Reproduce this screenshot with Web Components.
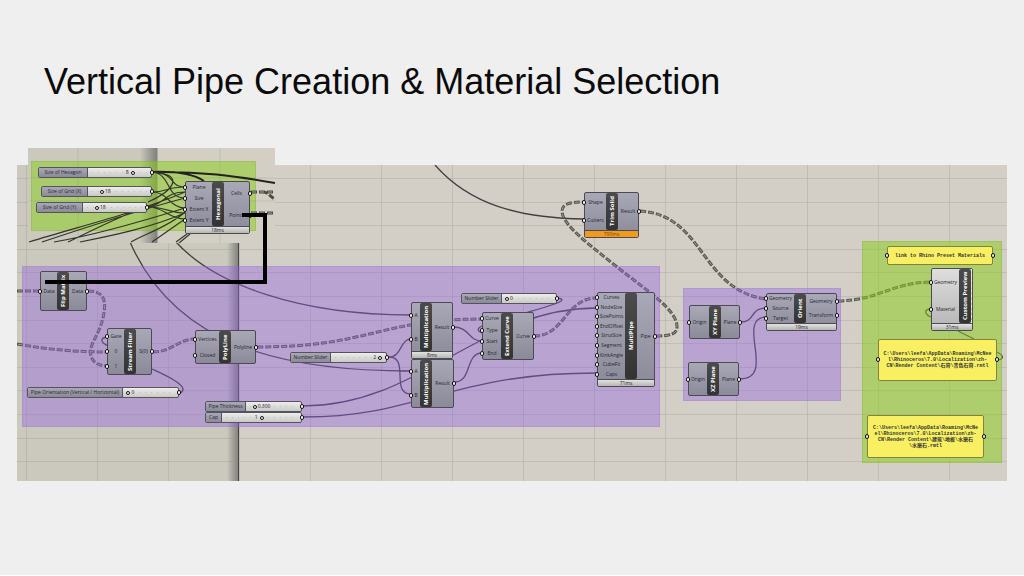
<!DOCTYPE html>
<html lang="en">
<head>
<meta charset="utf-8">
<title>Vertical Pipe Creation &amp; Material Selection</title>
<style>
  body { margin: 0; background: #efefef; font-family: "Liberation Sans", Arial, sans-serif; }
</style>
</head>
<body>
<deck-slide>
  <span slot="title">Vertical Pipe Creation &amp; Material Selection</span>
  <gh-canvas>
    <gh-wires></gh-wires>
    <gh-group x="5" y="101" w="638" h="161"></gh-group>
    <gh-group x="666" y="123" w="158" h="113"></gh-group>
    <gh-group x="845" y="76" w="140" h="222" tone="green"></gh-group>

    <gh-node x="23" y="106" w="47" h="40" core="17" name="Flip Matrix" inputs="Data" outputs="Data"></gh-node>
    <gh-node x="90" y="163" w="45" h="47" core="17" name="Stream Filter" inputs="Gate,0,1" outputs="S(0)"></gh-node>
    <gh-node x="178" y="165" w="61" h="34" core="24" name="PolyLine" inputs="Vertices,Closed" outputs="Polyline"></gh-node>
    <gh-node x="394" y="194" w="43" h="49" core="9" name="Multiplication" inputs="A,B" outputs="Result"></gh-node>
    <gh-node x="394" y="137" w="42" h="57" core="9" name="Multiplication" inputs="A,B" outputs="Result" time="8ms"></gh-node>
    <gh-node x="465" y="147" w="52" h="48" core="19" name="Extend Curve" inputs="Curve,Type,Start,End" outputs="Curve"></gh-node>
    <gh-node x="580" y="127" w="58" h="95" core="28" name="MultiPipe" inputs="Curves,NodeSize,SizePoints,EndOffset,StrutSize,Segment,KinkAngle,CubeFit,Caps" outputs="Pipe" time="71ms"></gh-node>
    <gh-node x="567" y="27" w="55" h="46" core="22" name="Trim Solid" inputs="Shape,Cutters" outputs="Result" time="790ms" state="slow"></gh-node>
    <gh-node x="672" y="140" w="51" h="34" core="20" name="XY Plane" inputs="Origin" outputs="Plane"></gh-node>
    <gh-node x="671" y="197" w="51" h="34" core="19" name="XZ Plane" inputs="Origin" outputs="Plane"></gh-node>
    <gh-node x="749" y="128" w="71" h="38" core="28" name="Orient" inputs="Geometry,Source,Target" outputs="Geometry,Transform" time="19ms"></gh-node>
    <gh-node x="914" y="103" w="42" h="63" core="28" name="Custom Preview" inputs="Geometry,Material" time="31ms" state="preview"></gh-node>

    <gh-slider x="10" y="222" w="152" label-width="95" label="Pipe Orientation (Vertical / Horizontal)" value="0" at="3"></gh-slider>
    <gh-slider x="188" y="236" w="97" label-width="40" label="Pipe Thickness" value="0.300" at="10"></gh-slider>
    <gh-slider x="188" y="247" w="97" label-width="16" label="Cap" value="1" at="50" side="left"></gh-slider>
    <gh-slider x="273" y="187" w="97" label-width="40" label="Number Slider" value="2" at="96" side="left"></gh-slider>
    <gh-slider x="444" y="128" w="96" label-width="40" label="Number Slider" value="0" at="2"></gh-slider>

    <gh-panel x="870" y="81" w="106" h="19">link to Rhino Preset Materials</gh-panel>
    <gh-panel x="861" y="174" w="119" h="42">C:\Users\leefa\AppData\Roaming\McNee<br>l\Rhinoceros\7.0\Localization\zh-<br>CN\Render Content\石膏\青色石膏.rmtl</gh-panel>
    <gh-panel x="850" y="250" w="117" h="43">C:\Users\leefa\AppData\Roaming\McNe<br>el\Rhinoceros\7.0\Localization\zh-<br>CN\Render Content\建筑\地板\水磨石<br>\水磨石.rmtl</gh-panel>

    <gh-inset>
      <gh-group x="3" y="13" w="225" h="70" tone="green"></gh-group>
      <gh-inset-wires></gh-inset-wires>
      <gh-slider x="10" y="19" w="114" label-width="49" label="Size of Hexagon" value="8" at="74" side="left"></gh-slider>
      <gh-slider x="13" y="38" w="111" label-width="46" label="Size of Grid (X)" value="18" at="18"></gh-slider>
      <gh-slider x="8" y="54" w="111" label-width="46" label="Size of Grid (Y)" value="18" at="18"></gh-slider>
      <gh-node x="157" y="33" w="65" h="53" core="27" name="Hexagonal" inputs="Plane,Size,Extent X,Extent Y" outputs="Cells,Points" time="18ms"></gh-node>
    </gh-inset>
    <gh-link></gh-link>
  </gh-canvas>
</deck-slide>

<script>
  /* Places an item on the free canvas from its x, y, w and h attributes. */
  const place = el => {
    for (const [attr, prop] of [['x', 'left'], ['y', 'top'], ['w', 'width'], ['h', 'height']]) {
      if (el.hasAttribute(attr)) el.style[prop] = el.getAttribute(attr) + 'px';
    }
  };
  const list = (el, attr) => (el.getAttribute(attr) || '').split(',').filter(Boolean);

  class Base extends HTMLElement {
    connectedCallback() {
      if (this.shadowRoot) return;
      place(this);
      this.attachShadow({ mode: 'open' }).innerHTML = this.view();
    }
  }

  customElements.define('deck-slide', class extends Base {
    view() {
      return `<style>
        :host { display: block; box-sizing: border-box; min-height: 100vh; padding: 60px 17px 40px; border-bottom: 1px solid #fff; }
        h1 { margin: 0 0 61px; padding-left: 27px; font-size: 36px; line-height: 44px; font-weight: 400; color: #0a0a0a; }
      </style><h1><slot name="title"></slot></h1><slot></slot>`;
    }
  });

  customElements.define('gh-canvas', class extends Base {
    view() {
      let grid = '';
      for (let i = 0; i < 14; i++) grid += `M${9.5 + i * 71} 0V316`;
      for (let i = 0; i < 13; i++) grid += `M0 ${Math.round(13 + i * 23.6) + 0.5}H990`;
      return `<style>
        :host { display: block; position: relative; height: 316px; background: #d3cfc7;
                font-family: "Open Sans", "Noto Sans", sans-serif; }
        .left { position: absolute; inset: 0 auto 0 0; width: 222px; border-right: 1px solid #444;
                box-sizing: border-box;
                background: linear-gradient(90deg, #cbc8be 210px, #8e8f87 219px, #85867e); }
        svg { position: absolute; inset: 0; width: 100%; height: 100%; }
      </style>
      <div class="left"></div>
      <svg aria-hidden="true"><path d="${grid}" fill="none" stroke="#8a8f7e" stroke-opacity=".26"/></svg>
      <slot></slot>`;
    }
  });

  customElements.define('gh-group', class extends Base {
    view() {
      return `<style>
        :host { display: block; position: absolute; box-sizing: border-box;
                background: rgba(146, 98, 226, .4); border: 1px solid rgba(140, 110, 200, .2); }
        :host([tone=green]) { background: rgba(137, 206, 21, .5); border-color: rgba(110, 150, 50, .2); }
      </style>`;
    }
  });

  customElements.define('gh-wires', class extends Base {
    view() {
      const tree = [
        'M17 291H40', 'M88 291C104 291 107 300 103 318C98 338 88 345 91 356C93 363 99 366 107 366',
        'M17 344C50 350 80 352 107 352', 'M153 352C172 352 178 339 195 339',
        'M257 347C370 347 380 319 482 319', 'M534 336C565 336 565 298 597 298',
        'M656 336C670 336 677 334 677 327C677 310 650 293 617 267C590 245 562 225 562 211C562 204 570 202 583 202',
        'M640 211C705 215 700 290 766 299', 'M838 301C880 300 890 283 931 282'].join('');
      const item = [
        'M435 165C470 205 520 218 584 219', 'M130 242C175 345 280 371 411 371', 'M176 242C215 285 300 315 411 315',
        'M389 357C402 357 400 339 411 339', 'M389 357C410 357 390 394 411 394',
        'M303 406C420 406 480 308 597 308', 'M303 417C420 417 450 373 597 373',
        'M453 327C470 327 468 341 482 341', 'M455 382C472 382 465 353 482 353',
        'M558 298C568 300 560 303 525 313', 'M482 326C477 328 477 331 482 333',
        'M180 393C192 387 165 375 152 369', 'M107 337C100 338 100 342 108 346',
        'M741 322C755 322 750 308 766 308', 'M740 379C777 379 735 318 766 317',
        'M931 309C924 309 924 314 931 317', 'M958 331L974 339', 'M997 352C1005 356 1003 360 997 360'].join('');
      return `<style>
        :host { display: block; position: absolute; inset: 0; }
        svg { display: block; width: 100%; height: 100%; fill: none; }
      </style>
      <svg aria-hidden="true"><g transform="translate(-17 -165)">
        <path d="${item}" stroke="#404040" stroke-width="1.3"/>
        <path d="${tree}" stroke="#55554f" stroke-width="3" stroke-dasharray="6 2"/>
        <path d="${tree}" stroke="#a09f95" stroke-width="1" stroke-dasharray="4 4" stroke-dashoffset="-1"/>
      </g></svg>`;
    }
  });

  customElements.define('gh-link', class extends Base {
    view() {
      return `<style>
        :host { display: block; position: absolute; inset: 0; pointer-events: none; }
        svg { display: block; width: 100%; height: 100%; }
      </style>
      <svg aria-hidden="true"><path d="M28 117H248V50H225" fill="none" stroke="#000" stroke-width="4"/></svg>`;
    }
  });

  customElements.define('gh-inset', class extends Base {
    view() {
      return `<style>
        :host { display: block; position: absolute; left: 11px; top: -17px; width: 247px; height: 95px;
                background: linear-gradient(90deg, #cbc8be 112px, #80817a 129px, #d3cfc5 130px); }
      </style><slot></slot>`;
    }
  });

  customElements.define('gh-inset-wires', class extends Base {
    view() {
      return `<style>
        :host { display: block; position: absolute; inset: 0; }
        svg { display: block; width: 100%; height: 100%; fill: none; }
      </style>
      <svg aria-hidden="true"><g transform="translate(-28 -148)">
        <path d="M28 178H275M28 201H275M78 148V243M220 148V243" stroke="#8a8f7e" stroke-opacity=".25"/>
        <path d="M152 172C200 171 235 176 275 183M152 172C180 171 195 175 204 181" stroke="#222" stroke-width="2"/>
        <path d="M152 172C172 174 165 198 185 198M152 172C185 174 175 190 148 202M152 172C178 174 168 187 185 187
                 M152 192C168 192 170 208 185 208M152 192C168 192 165 187 185 187M148 207C165 207 168 219 185 219M148 207C165 204 165 192 185 192
                 M148 207C165 207 170 213 185 213
                 M29 242C80 226 130 215 185 192M42 242C90 226 140 210 185 198M54 242C90 236 140 222 185 208M68 242C85 234 100 226 130 213M80 242C110 236 150 228 185 213
                 M131 242C145 234 170 226 185 212M152 242L185 219M176 242L187 234M179 243L190 234" stroke="#33352c" stroke-width="1.2"/>
        <path d="M251 192H275M251 213H275M262 192C270 192 268 196 275 199" stroke="#4c4c46" stroke-width="3" stroke-dasharray="6 2"/>
        <path d="M251 192H275M251 213H275" stroke="#a09f95" stroke-dasharray="4 4" stroke-dashoffset="-1"/>
      </g></svg>`;
    }
  });

  customElements.define('gh-node', class extends Base {
    view() {
      const ports = attr => list(this, attr).map(p => `<li>${p}</li>`).join('');
      const time = this.getAttribute('time');
      return `<style>
        :host { display: flex; flex-direction: column; position: absolute; box-sizing: border-box;
                border: 1px solid #4b4a55; border-radius: 2px; color: #26262e;
                background: linear-gradient(#a9a8b6, #8b8a99); font-size: 5px; line-height: 7px; }
        :host([state=preview]) { background: linear-gradient(#dedede, #b4b4b4); }
        :host([state=preview]) .body { border-right: 1px dashed #eee; }
        .body { display: grid; grid-template-columns: ${this.getAttribute('core') - 1}px 12px minmax(0, 1fr); flex: 1; min-height: 0; }
        ul { display: flex; flex-direction: column; justify-content: space-around; margin: 0; padding: 0; list-style: none; white-space: nowrap; }
        li { position: relative; display: flex; justify-content: center; }
        li::before { content: ""; position: absolute; top: 1px; left: -3px; box-sizing: border-box; width: 4px; height: 5px;
                     border: 1px solid #111; border-radius: 2px; background: #fff; }
        .out li::before { left: auto; right: -3px; }
        h2 { display: flex; align-items: center; justify-content: center; margin: 0; writing-mode: vertical-rl; transform: rotate(180deg);
             background: linear-gradient(#333, #4b4b4b); border-radius: 2px; color: #fff; font-size: 6px; line-height: 12px; font-weight: 700; white-space: nowrap; }
        footer { height: 6px; border-top: 1px solid #4b4a55; text-align: center; line-height: 6px;
                 background: linear-gradient(#e2e2e0, #b5b5b1); }
        :host([state=slow]) footer { background: #f09a1e; color: #7a4300; }
      </style>
      <div class="body"><ul>${ports('inputs')}</ul><h2>${this.getAttribute('name')}</h2><ul class="out">${ports('outputs')}</ul></div>
      ${time ? `<footer>${time}</footer>` : ''}`;
    }
  });

  customElements.define('gh-slider', class extends Base {
    view() {
      const at = this.getAttribute('at');
      const left = this.getAttribute('side') === 'left';
      return `<style>
        :host { display: flex; position: absolute; box-sizing: border-box; height: 11px; border: 1px solid #55545e;
                border-radius: 2px; background: linear-gradient(#ededeb, #c9c9c6); color: #26262e; font-size: 5px; line-height: 9px; }
        :host::after { content: ""; position: absolute; right: -3px; top: 2px; box-sizing: border-box; width: 4px; height: 5px;
                border: 1px solid #111; border-radius: 2px; background: #fff; }
        label { box-sizing: border-box; flex: none; width: ${this.getAttribute('label-width')}px; text-align: center; white-space: nowrap;
                background: linear-gradient(#a9a8b6, #8b8a99); border-right: 1px solid #55545e; }
        .track { position: relative; flex: 1; min-width: 0; margin: 0 2px; display: flex; }
        .track::before { content: ""; position: absolute; inset: 4px 2px; background: repeating-linear-gradient(90deg, #bcbcba 0 1px, transparent 1px 6px); }
        input { position: relative; appearance: none; width: 100%; height: 9px; margin: 0; background: none; }
        input::-webkit-slider-thumb { appearance: none; box-sizing: border-box; width: 4px; height: 4px; border: 1px solid #111; border-radius: 2px; background: #fff; }
        output { position: absolute; top: 0; ${left
          ? `right: calc((100% - 4px) * ${(100 - at) / 100} + 6px)`
          : `left: calc((100% - 4px) * ${at / 100} + 5px)`}; }
      </style>
      <label for="range">${this.getAttribute('label')}</label>
      <div class="track"><input id="range" type="range" min="0" max="100" value="${at}"><output for="range">${this.getAttribute('value')}</output></div>`;
    }
  });

  customElements.define('gh-panel', class extends Base {
    view() {
      return `<style>
        :host { display: flex; align-items: center; justify-content: center; position: absolute; box-sizing: border-box;
                border: 1px solid #85803c; border-radius: 2px; background: #f8f062; color: #333;
                font: 700 5px/6px "Liberation Mono", "Noto Sans CJK SC", monospace; text-align: center; white-space: nowrap; }
        :host::before, :host::after { content: ""; position: absolute; top: calc(50% - 3px); box-sizing: border-box; width: 4px; height: 5px;
                border: 1px solid #111; border-radius: 2px; background: #e8e8e8; }
        :host::before { left: -3px; }
        :host::after { right: -3px; }
      </style><div><slot></slot></div>`;
    }
  });
</script>
</body>
</html>
